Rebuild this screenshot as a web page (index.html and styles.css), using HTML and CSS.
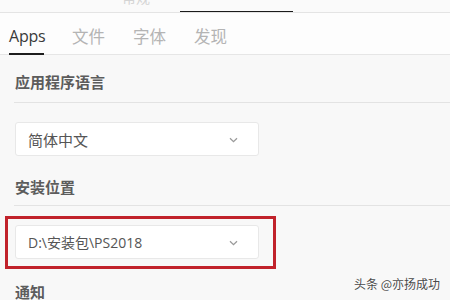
FILE: index.html
```html
<!DOCTYPE html>
<html lang="zh-CN">
<head>
<meta charset="utf-8">
<link rel="stylesheet" href="styles.css">
</head>
<body>
<div class="page">
  <div class="topbar">
    <span class="top-tab faint">常规</span>
    <span class="top-tab active"></span>
  </div>
  <nav class="tabs">
    <span class="tab current">Apps</span>
    <span class="tab">文件</span>
    <span class="tab">字体</span>
    <span class="tab">发现</span>
  </nav>
  <main class="content">
    <h2 class="heading">应用程序语言</h2>
    <div class="divider"></div>
    <div class="select first">
      <span>简体中文</span>
      <svg class="chev" width="9" height="6" viewBox="0 0 9 6"><path d="M1 1.2 L4.5 4.6 L8 1.2" fill="none" stroke="#9a9a9a" stroke-width="1.3"/></svg>
    </div>
    <h2 class="heading second">安装位置</h2>
    <div class="divider"></div>
    <div class="highlight">
      <div class="select path">
        <span>D:\安装包\PS2018</span>
        <svg class="chev" width="9" height="6" viewBox="0 0 9 6"><path d="M1 1.2 L4.5 4.6 L8 1.2" fill="none" stroke="#9a9a9a" stroke-width="1.3"/></svg>
      </div>
    </div>
    <h2 class="heading third">通知</h2>
  </main>
  <div class="watermark">头条 @亦扬成功</div>
</div>
</body>
</html>
```
FILE: styles.css
```css
* { box-sizing: border-box; }
html, body { margin: 0; padding: 0; }
body {
  width: 450px;
  height: 300px;
  overflow: hidden;
  background: #f8f8f8;
  font-family: "Noto Sans", "Noto Sans CJK SC", sans-serif;
}
.page { position: relative; width: 450px; height: 300px; overflow: hidden; }

.topbar {
  height: 13px;
  background: #fafafa;
  border-bottom: 1px solid #e4e4e4;
  display: flex;
  align-items: flex-end;
  padding-left: 122px;
  overflow: hidden;
}
.top-tab.faint {
  font-family: "Noto Sans CJK SC", sans-serif;
  font-size: 14px;
  line-height: 14px;
  color: #d4d4d4;
  margin-bottom: 8px;
  width: 58px;
  white-space: nowrap;
}
.top-tab.active {
  display: block;
  width: 113px;
  height: 2px;
  background: #1b1b1b;
  margin-bottom: -1px;
}

.tabs {
  height: 42px;
  background: #fdfdfd;
  border-bottom: 1px solid #e6e6e6;
  display: flex;
  align-items: flex-end;
  gap: 28px;
  padding-left: 9px;
}
.tab {
  font-family: "Noto Sans CJK SC", sans-serif;
  font-size: 16.5px;
  line-height: 22px;
  color: #b4b4b4;
  padding-bottom: 8px;
  margin-bottom: -1px;
}
.tab.current {
  font-family: "Open Sans", "Noto Sans", sans-serif;
  font-size: 16px;
  color: #3a3a3a;
  border-bottom: 2px solid #1e1e1e;
  padding-bottom: 6px;
  width: 35px;
  letter-spacing: -0.2px;
}

.content {
  padding: 17px 0 0 15px;
}
.heading {
  margin: 0;
  font-family: "Noto Sans CJK SC", sans-serif;
  font-size: 15px;
  line-height: 20px;
  font-weight: 700;
  color: #5c5c5c;
}
.heading.second { margin-top: 21px; }
.heading.third { margin-top: 13px; }
.divider {
  height: 1px;
  background: #e3e3e3;
  margin-top: 10px;
  margin-left: -1px;
}
.heading.second + .divider { margin-top: 8px; }

.select {
  width: 244px;
  height: 34px;
  background: #ffffff;
  border: 1px solid #e8e8e8;
  border-radius: 3px;
  display: flex;
  align-items: center;
  justify-content: space-between;
  padding: 0 20px 0 12px;
  font-family: "Noto Sans CJK SC", sans-serif;
  font-size: 15px;
  color: #555555;
}
.select.path {
  font-family: "Open Sans", "Noto Sans CJK SC", sans-serif;
  font-size: 14px;
}
.select.first { margin-top: 19px; }
.chev { margin-top: 1px; }

.highlight {
  margin: 10px 0 0 -10px;
  width: 271px;
  height: 53px;
  border: 3px solid #c1222b;
  padding: 6px 0 0 7px;
}

.watermark {
  position: absolute;
  right: 10px;
  top: 276px;
  font-family: "Noto Sans CJK SC", sans-serif;
  font-size: 12px;
  line-height: 16px;
  color: #4a4a4a;
  text-shadow: 0 0 1px #fff, 0 0 2px #fff;
}
```
